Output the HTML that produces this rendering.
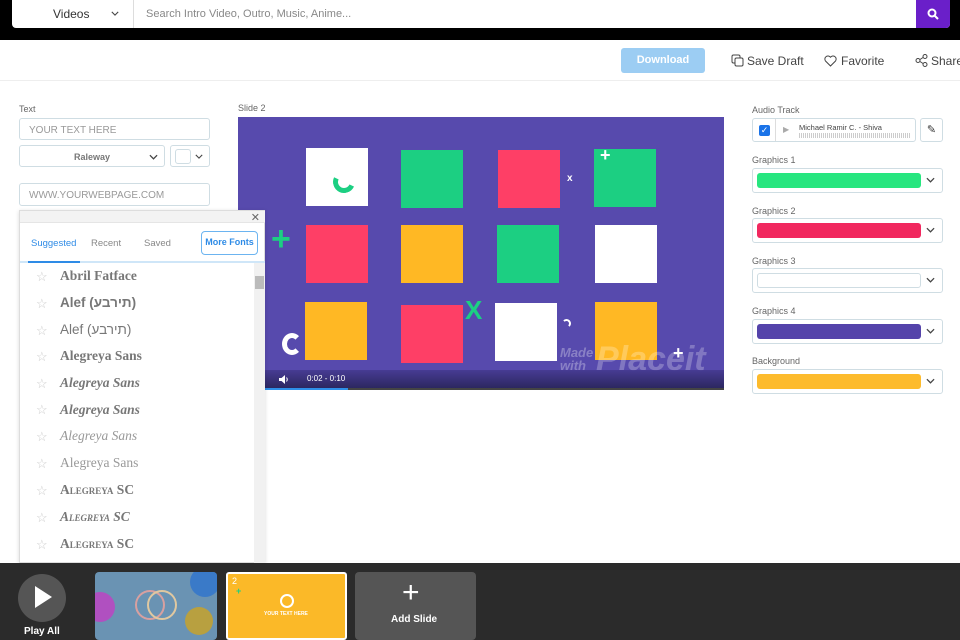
<!DOCTYPE html>
<html><head><meta charset="utf-8"><style>
*{box-sizing:border-box;margin:0;padding:0}
body{width:960px;height:640px;overflow:hidden;background:#fff;font-family:"Liberation Sans",sans-serif;position:relative;color:#555}
.a{position:absolute}
.lbl{font-size:9px;color:#666}
.inp{border:1px solid #cfdde3;border-radius:3px;background:#fff}
.sq{position:absolute;width:62px;height:58px}
.row{position:absolute;left:40px;font-family:"Liberation Serif",serif;color:#777;font-size:13.5px;font-weight:bold;white-space:nowrap}
.star{position:absolute;left:16px;color:#ccc;font-size:13px}
.sel{position:absolute;left:752px;width:191px;height:25px;border:1px solid #cfdde3;border-radius:3px;background:#fff}
.sw{position:absolute;left:4px;top:4px;width:164px;height:15px;border-radius:3px}
.chev{position:absolute;right:7px;top:8px}
</style></head><body>
<svg width="0" height="0" style="position:absolute"><defs><symbol id="cv" viewBox="0 0 10 6"><path d="M1 1L5 5L9 1" stroke="#444" stroke-width="1.4" fill="none"/></symbol></defs></svg>
<div class="a" style="left:0;top:0;width:960px;height:40px;background:#000"></div>
<div class="a" style="left:12px;top:0;width:938px;height:28px;background:#fff;border-radius:0 0 4px 4px"></div>
<div class="a" style="left:53px;top:7px;font-size:12px;color:#333">Videos</div>
<svg class="a" style="left:111px;top:11px" width="8" height="5"><use href="#cv"/></svg>
<div class="a" style="left:133px;top:0;width:1px;height:28px;background:#ddd"></div>
<div class="a" style="left:146px;top:8px;font-size:11px;color:#888">Search Intro Video, Outro, Music, Anime...</div>
<div class="a" style="left:916px;top:0;width:34px;height:28px;background:#6a1fc9;border-radius:0 0 4px 0"></div>
<svg class="a" style="left:927px;top:8px" width="12" height="12"><circle cx="5" cy="5" r="3.5" stroke="#fff" stroke-width="2" fill="none"/><path d="M7.5 7.5L11 11" stroke="#fff" stroke-width="2"/></svg>
<div class="a" style="left:0;top:80px;width:960px;height:1px;background:#eee"></div>
<div class="a" style="left:621px;top:48px;width:84px;height:25px;background:#9ccdf3;border-radius:3px;color:#fff;font-size:11px;font-weight:bold;text-align:center;line-height:25px">Download</div>
<svg class="a" style="left:731px;top:54px" width="13" height="13"><rect x="1" y="1" width="8" height="8" rx="1.5" fill="none" stroke="#444"/><rect x="4" y="4" width="8" height="8" rx="1.5" fill="#fff" stroke="#444"/></svg>
<div class="a" style="left:747px;top:54px;font-size:12px;color:#444;white-space:nowrap">Save Draft</div>
<svg class="a" style="left:824px;top:55px" width="13" height="12"><path d="M6.5 11L1.5 6A3 3 0 0 1 6.5 2.2A3 3 0 0 1 11.5 6Z" fill="none" stroke="#444"/></svg>
<div class="a" style="left:841px;top:54px;font-size:12px;color:#444;white-space:nowrap">Favorite</div>
<svg class="a" style="left:915px;top:54px" width="13" height="13"><circle cx="3" cy="6.5" r="2" fill="none" stroke="#444"/><circle cx="10" cy="2.5" r="2" fill="none" stroke="#444"/><circle cx="10" cy="10.5" r="2" fill="none" stroke="#444"/><path d="M5 5.5L8 3.5M5 7.5L8 9.5" stroke="#444"/></svg>
<div class="a" style="left:931px;top:54px;font-size:12px;color:#444;white-space:nowrap">Share</div>

<div class="a lbl" style="left:19px;top:104px">Text</div>
<div class="a inp" style="left:19px;top:118px;width:191px;height:22px;font-size:10px;color:#999;padding:6px 9px">YOUR TEXT HERE</div>
<div class="a inp" style="left:19px;top:145px;width:146px;height:22px;font-size:9px;color:#777;font-weight:bold;text-align:center;padding-top:6px">Raleway<svg class="a" style="right:6px;top:8px" width="9" height="6"><use href="#cv"/></svg></div>
<div class="a inp" style="left:170px;top:145px;width:40px;height:22px"><div class="a inp" style="left:4px;top:3px;width:16px;height:15px"></div><svg class="a" style="right:6px;top:8px" width="8" height="5"><use href="#cv"/></svg></div>
<div class="a inp" style="left:19px;top:183px;width:191px;height:23px;font-size:10px;color:#999;padding:6px 9px">WWW.YOURWEBPAGE.COM</div>

<div class="a lbl" style="left:238px;top:103px">Slide 2</div>
<div class="a" style="left:238px;top:117px;width:486px;height:273px;background:#574aad;overflow:hidden">
<div class="sq" style="left:68px;top:31px;background:#fff"></div>
<div class="sq" style="left:163px;top:33px;background:#1ccf82"></div>
<div class="sq" style="left:260px;top:33px;background:#fe3f66"></div>
<div class="sq" style="left:356px;top:32px;background:#1ccf82"></div>
<div class="sq" style="left:68px;top:108px;background:#fe3f66"></div>
<div class="sq" style="left:163px;top:108px;background:#ffb824"></div>
<div class="sq" style="left:259px;top:108px;background:#1ccf82"></div>
<div class="sq" style="left:357px;top:108px;background:#fff"></div>
<div class="sq" style="left:67px;top:185px;background:#ffb824"></div>
<div class="sq" style="left:163px;top:188px;background:#fe3f66"></div>
<div class="sq" style="left:257px;top:186px;background:#fff"></div>
<div class="sq" style="left:357px;top:185px;background:#ffb824"></div>
<div class="a" style="left:33px;top:105px;color:#1ccf82;font-size:34px;font-weight:bold;line-height:34px">+</div>
<div class="a" style="left:227px;top:178px;color:#1ccf82;font-size:26px;font-weight:bold">X</div>
<div class="a" style="left:329px;top:56px;color:#fff;font-size:10px;font-weight:bold">x</div>
<div class="a" style="left:362px;top:28px;color:#fff;font-size:18px;font-weight:bold">+</div>
<div class="a" style="left:435px;top:226px;color:#fff;font-size:18px;font-weight:bold">+</div>
<div class="a" style="left:95px;top:54px;width:22px;height:22px;border:5px solid #1ccf82;border-radius:50%;border-top-color:transparent;border-right-color:transparent;transform:rotate(-20deg)"></div>
<div class="a" style="left:44px;top:216px;width:20px;height:22px;border:5px solid #fff;border-radius:50%;border-right-color:transparent"></div>
<div class="a" style="left:324px;top:202px;width:9px;height:9px;border:2px solid #fff;border-radius:50%;border-bottom-color:transparent;border-left-color:transparent"></div>
<div class="a" style="left:322px;top:229px;color:rgba(255,255,255,.3);font-size:13px;font-style:italic;font-weight:bold;line-height:13px">Made<br>with</div>
<div class="a" style="left:358px;top:223px;color:rgba(255,255,255,.25);font-size:34px;font-style:italic;font-weight:bold">Placeit</div>
<div class="a" style="left:27px;top:253px;width:459px;height:18px;background:linear-gradient(rgba(60,50,130,.6),#2c2760)"></div>
<svg class="a" style="left:40px;top:257px" width="12" height="11"><path d="M1 4H3.5L7 1V10L3.5 7H1Z" fill="#fff"/><path d="M8.5 3.5Q10 5.5 8.5 7.5" stroke="#fff" fill="none"/></svg>
<div class="a" style="left:69px;top:257px;color:#fff;font-size:8px">0:02 - 0:10</div>
<div class="a" style="left:27px;top:271px;width:459px;height:2px;background:#444"></div>
<div class="a" style="left:27px;top:271px;width:83px;height:2px;background:#2e8fe8"></div>
</div>

<div class="a" style="left:19px;top:210px;width:246px;height:353px;background:#fff;border:1px solid #ddd;box-shadow:0 1px 4px rgba(0,0,0,.15)">
<div class="a" style="left:0;top:0;width:245px;height:12px;background:#f3f3f3;border-bottom:1px solid #e5e5e5"></div>
<div class="a" style="right:4px;top:0;font-size:11px;color:#666">✕</div>
<div class="a" style="left:11px;top:27px;font-size:9.5px;color:#2e8be6">Suggested</div>
<div class="a" style="left:71px;top:27px;font-size:9.5px;color:#888">Recent</div>
<div class="a" style="left:124px;top:27px;font-size:9.5px;color:#888">Saved</div>
<div class="a" style="left:181px;top:20px;width:57px;height:24px;border:1.5px solid #6cb4f0;border-radius:4px;font-size:9px;color:#2e8be6;font-weight:bold;text-align:center;line-height:21px">More Fonts</div>
<div class="a" style="left:0;top:50px;width:245px;height:2px;background:#cfe6f8"></div>
<div class="a" style="left:8px;top:50px;width:52px;height:2px;background:#2e8be6"></div>
<div class="a" style="left:234px;top:52px;width:11px;height:300px;background:#f1f1f1"></div>
<div class="a" style="left:235px;top:65px;width:9px;height:13px;background:#bbb"></div>
<div class="star" style="top:58px">☆</div><div class="row" style="top:57px">Abril Fatface</div>
<div class="star" style="top:85px">☆</div><div class="row" style="top:84px;font-family:'Liberation Sans',sans-serif">Alef (תירבע)</div>
<div class="star" style="top:112px">☆</div><div class="row" style="top:111px;font-family:'Liberation Sans',sans-serif;font-weight:normal">Alef (תירבע)</div>
<div class="star" style="top:138px">☆</div><div class="row" style="top:137px">Alegreya Sans</div>
<div class="star" style="top:165px">☆</div><div class="row" style="top:164px;font-style:italic">Alegreya Sans</div>
<div class="star" style="top:191px">☆</div><div class="row" style="top:191px;font-style:italic">Alegreya Sans</div>
<div class="star" style="top:218px">☆</div><div class="row" style="top:217px;font-style:italic;font-weight:normal;color:#999">Alegreya Sans</div>
<div class="star" style="top:245px">☆</div><div class="row" style="top:244px;font-weight:normal;color:#999">Alegreya Sans</div>
<div class="star" style="top:272px">☆</div><div class="row" style="top:271px;font-variant:small-caps">Alegreya SC</div>
<div class="star" style="top:299px">☆</div><div class="row" style="top:298px;font-variant:small-caps;font-style:italic">Alegreya SC</div>
<div class="star" style="top:326px">☆</div><div class="row" style="top:325px;font-variant:small-caps">Alegreya SC</div>
</div>

<div class="a lbl" style="left:752px;top:105px">Audio Track</div>
<div class="a inp" style="left:752px;top:118px;width:164px;height:24px">
<div class="a" style="left:6px;top:6px;width:11px;height:11px;background:#1a73e8;border-radius:2px;color:#fff;font-size:9px;line-height:11px;text-align:center">✓</div>
<div class="a" style="left:22px;top:0;width:1px;height:22px;background:#ddd"></div>
<div class="a" style="left:30px;top:6px;font-size:8px;color:#aaa">▶</div>
<div class="a" style="left:46px;top:4px;font-size:7.5px;color:#444;white-space:nowrap">Michael Ramir C. - Shiva</div>
<div class="a" style="left:46px;top:14px;width:112px;height:5px;background:repeating-linear-gradient(90deg,#ccc 0 1px,transparent 1px 2px)"></div>
</div>
<div class="a inp" style="left:920px;top:118px;width:23px;height:24px;font-size:11px;text-align:center;line-height:22px;color:#333">✎</div>
<div class="a lbl" style="left:752px;top:155px">Graphics 1</div>
<div class="sel" style="top:168px"><div class="sw" style="background:#27e67f"></div><svg class="chev" width="9" height="6"><use href="#cv"/></svg></div>
<div class="a lbl" style="left:752px;top:206px">Graphics 2</div>
<div class="sel" style="top:218px"><div class="sw" style="background:#f1285f"></div><svg class="chev" width="9" height="6"><use href="#cv"/></svg></div>
<div class="a lbl" style="left:752px;top:256px">Graphics 3</div>
<div class="sel" style="top:268px"><div class="sw" style="background:#fff;border:1px solid #cfdde3"></div><svg class="chev" width="9" height="6"><use href="#cv"/></svg></div>
<div class="a lbl" style="left:752px;top:306px">Graphics 4</div>
<div class="sel" style="top:319px"><div class="sw" style="background:#5443aa"></div><svg class="chev" width="9" height="6"><use href="#cv"/></svg></div>
<div class="a lbl" style="left:752px;top:356px">Background</div>
<div class="sel" style="top:369px"><div class="sw" style="background:#fdbb2c"></div><svg class="chev" width="9" height="6"><use href="#cv"/></svg></div>

<div class="a" style="left:0;top:563px;width:960px;height:77px;background:#2b2b2b"></div>
<div class="a" style="left:18px;top:574px;width:48px;height:48px;border-radius:50%;background:#555"></div>
<div class="a" style="left:35px;top:586px;width:0;height:0;border-left:17px solid #fff;border-top:11px solid transparent;border-bottom:11px solid transparent"></div>
<div class="a" style="left:24px;top:626px;color:#fff;font-size:10px;font-weight:bold">Play All</div>
<div class="a" style="left:95px;top:572px;width:122px;height:68px;background:#6a93b3;border-radius:4px;overflow:hidden">
<div class="a" style="left:-10px;top:20px;width:30px;height:30px;border-radius:50%;background:#b050c0"></div>
<div class="a" style="left:95px;top:-5px;width:30px;height:30px;border-radius:50%;background:#3a7ac8"></div>
<div class="a" style="left:90px;top:35px;width:28px;height:28px;border-radius:50%;background:#b8a040"></div>
<div class="a" style="left:40px;top:18px;width:30px;height:30px;border-radius:50%;border:2px solid #d8a0a0"></div>
<div class="a" style="left:52px;top:18px;width:30px;height:30px;border-radius:50%;border:2px solid #e0c8a0"></div>
</div>
<div class="a" style="left:226px;top:572px;width:121px;height:68px;background:#fbb928;border:2px solid #fff;border-radius:3px">
<div class="a" style="left:4px;top:2px;color:#fff;font-size:9px">2</div>
<div class="a" style="left:52px;top:20px;width:14px;height:14px;border:2px solid #fff;border-radius:50%"></div>
<div class="a" style="left:36px;top:37px;color:#fff;font-size:5px;font-weight:bold">YOUR TEXT HERE</div>
<div class="a" style="left:8px;top:12px;color:#1ccf82;font-size:9px;font-weight:bold">+</div>
</div>
<div class="a" style="left:355px;top:572px;width:121px;height:68px;background:#555;border-radius:4px">
<div class="a" style="left:47px;top:6px;color:#fff;font-size:30px;line-height:30px">+</div>
<div class="a" style="left:36px;top:42px;color:#fff;font-size:10px;font-weight:bold">Add Slide</div>
</div>
</body></html>
